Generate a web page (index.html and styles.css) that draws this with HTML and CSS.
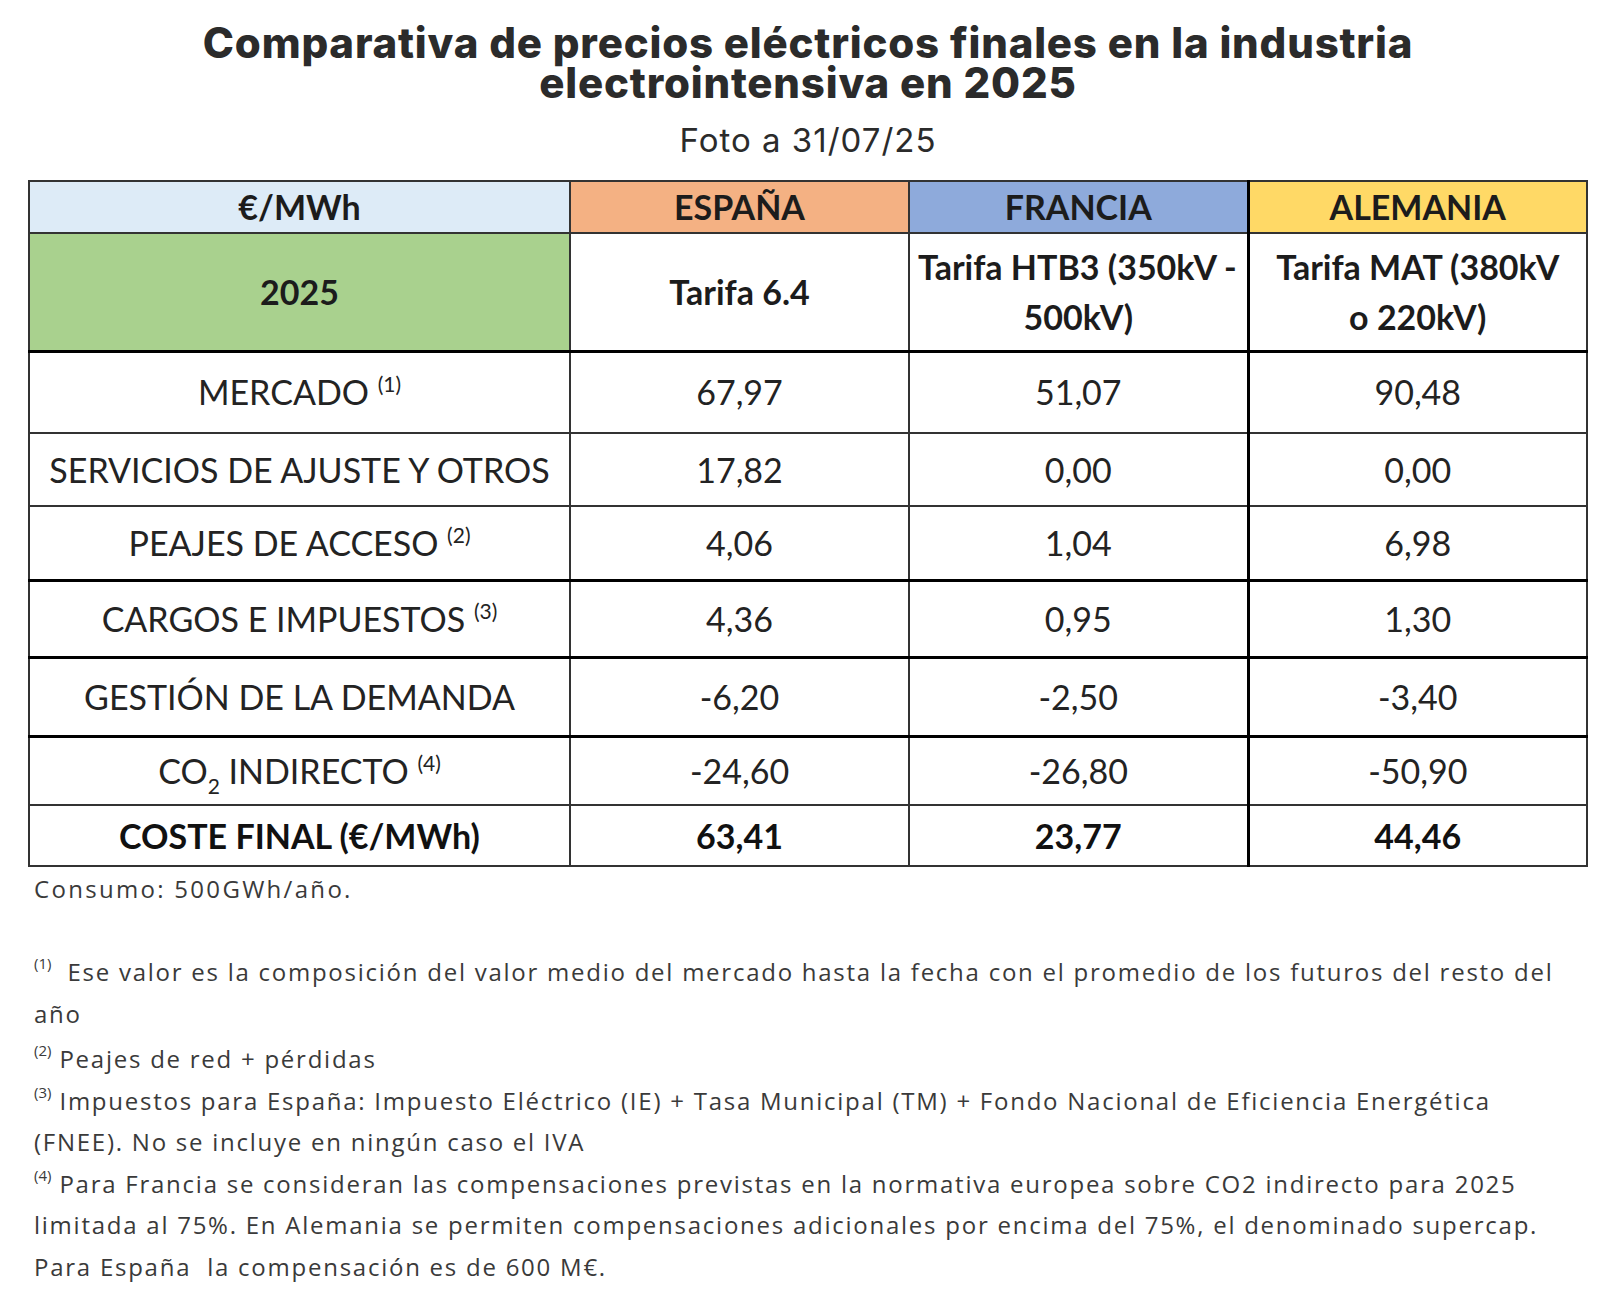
FILE: index.html
```html
<!DOCTYPE html>
<html lang="es">
<head>
<meta charset="utf-8">
<title>Comparativa de precios eléctricos</title>
<link rel="stylesheet" href="styles.css">
</head>
<body>
<main class="page">
  <header class="head">
    <h1 class="title">Comparativa de precios eléctricos finales en la industria<br>electrointensiva en 2025</h1>
    <p class="subtitle">Foto a 31/07/25</p>
  </header>

  <table class="grid">
    <colgroup>
      <col class="c-label"><col class="c-val"><col class="c-val"><col class="c-val">
    </colgroup>
    <tr class="r-head">
      <th class="bg-unit">€/MWh</th>
      <th class="bg-es">ESPAÑA</th>
      <th class="bg-fr">FRANCIA</th>
      <th class="bg-de sep">ALEMANIA</th>
    </tr>
    <tr class="r-tariff">
      <th class="bg-year">2025</th>
      <th>Tarifa 6.4</th>
      <th class="clip"><span class="line-start">Tarifa HTB3 (350kV -</span><span class="line-mid">500kV)</span></th>
      <th class="sep">Tarifa MAT (380kV<br>o 220kV)</th>
    </tr>
    <tr class="r-mercado thick">
      <td>MERCADO <sup>(1)</sup></td><td>67,97</td><td>51,07</td><td class="sep">90,48</td>
    </tr>
    <tr class="r-serv">
      <td>SERVICIOS DE AJUSTE Y OTROS</td><td>17,82</td><td>0,00</td><td class="sep">0,00</td>
    </tr>
    <tr class="r-peajes">
      <td>PEAJES DE ACCESO <sup>(2)</sup></td><td>4,06</td><td>1,04</td><td class="sep">6,98</td>
    </tr>
    <tr class="r-cargos thick">
      <td>CARGOS E IMPUESTOS <sup>(3)</sup></td><td>4,36</td><td>0,95</td><td class="sep">1,30</td>
    </tr>
    <tr class="r-gestion thick">
      <td>GESTIÓN DE LA DEMANDA</td><td>-6,20</td><td>-2,50</td><td class="sep">-3,40</td>
    </tr>
    <tr class="r-co2 thick">
      <td>CO<sub>2</sub> INDIRECTO <sup>(4)</sup></td><td>-24,60</td><td>-26,80</td><td class="sep">-50,90</td>
    </tr>
    <tr class="r-total">
      <td>COSTE FINAL (€/MWh)</td><td>63,41</td><td>23,77</td><td class="sep">44,46</td>
    </tr>
  </table>

  <section class="notes">
    <p class="consumo">Consumo: 500GWh/año.</p>
    <p class="note first"><sup class="mark">(1)</sup>&nbsp; Ese valor es la composición del valor medio del mercado hasta la fecha con el promedio de los futuros del resto del<br>año</p>
    <p class="note"><sup class="mark">(2)</sup> Peajes de red + pérdidas</p>
    <p class="note"><sup class="mark">(3)</sup> Impuestos para España: Impuesto Eléctrico (IE) + Tasa Municipal (TM) + Fondo Nacional de Eficiencia Energética<br>(FNEE). No se incluye en ningún caso el IVA</p>
    <p class="note"><sup class="mark">(4)</sup> Para Francia se consideran las compensaciones previstas en la normativa europea sobre CO2 indirecto para 2025<br>limitada al 75%. En Alemania se permiten compensaciones adicionales por encima del 75%, el denominado supercap.<br>Para España&nbsp; la compensación es de 600 M€.</p>
  </section>
</main>
</body>
</html>
```

FILE: styles.css
```css
* { box-sizing: border-box; }

html, body {
  margin: 0;
  background: #ffffff;
}

.page {
  width: 1600px;
  padding: 23px 12px 0 28px;
  font-family: Lato, "Open Sans", sans-serif;
  color: #262626;
}

.head {
  text-align: center;
}

.title {
  margin: 0;
  font-family: Inter, "Open Sans", sans-serif;
  font-weight: 800;
  font-size: 42px;
  line-height: 40px;
  letter-spacing: 0.8px;
  color: #2b2b2b;
}

.subtitle {
  margin: 19px 0 0;
  font-family: Inter, "Open Sans", sans-serif;
  font-weight: 400;
  font-size: 33px;
  line-height: 36px;
  letter-spacing: 1px;
  color: #2b2b2b;
}

.grid {
  margin-top: 22px;
  width: 1560px;
  border-collapse: collapse;
  table-layout: fixed;
  border: 2px solid #333;
}

.c-label { width: 541px; }
.c-val { width: 339px; }

.grid th,
.grid td {
  padding: 0;
  text-align: center;
  vertical-align: middle;
  font-size: 34px;
  line-height: 50px;
  border: 2px solid #333;
  color: #232323;
}

.grid th { font-weight: 700; color: #1c1c1c; }
.grid td { font-weight: 400; }

.grid .sep { border-left: 3px solid #000; }

.grid .thick td { border-top: 3px solid #000; }

.r-head th { height: 52px; }
.r-tariff th { height: 118px; }
.r-mercado td { height: 82px; }
.r-serv td { height: 73px; }
.r-peajes td { height: 74px; }
.r-cargos td { height: 77px; }
.r-gestion td { height: 79px; }
.r-co2 td { height: 69px; }
.r-total td { height: 61px; font-weight: 700; color: #111; }

.bg-unit { background: #ddebf7; }
.bg-es { background: #f4b183; }
.bg-fr { background: #8eaadb; }
.bg-de { background: #ffd966; }
.bg-year { background: #a9d18e; }

.grid .clip { overflow: hidden; }

.line-start {
  display: block;
  white-space: nowrap;
  text-align: left;
  padding-left: 8px;
  overflow: hidden;
}

.line-mid {
  display: block;
  text-align: center;
}

.grid sup {
  font-size: 21px;
  line-height: 0;
  vertical-align: 13px;
}

.grid sub {
  font-size: 21px;
  line-height: 0;
  vertical-align: -10px;
}

.notes {
  padding-left: 6px;
  color: #3a3a3a;
  font-family: "Open Sans", Lato, sans-serif;
  font-size: 24px;
  letter-spacing: 1.75px;
}

.consumo {
  margin: 6px 0 0;
  line-height: 32px;
  letter-spacing: 2.3px;
}

.note {
  margin: 0;
  line-height: 41.5px;
  white-space: nowrap;
}

.note.first { margin-top: 46px; }
.note.first + .note { margin-top: 4px; }

.mark {
  font-size: 15px;
  line-height: 0;
  vertical-align: 12px;
  letter-spacing: 0;
}
```
